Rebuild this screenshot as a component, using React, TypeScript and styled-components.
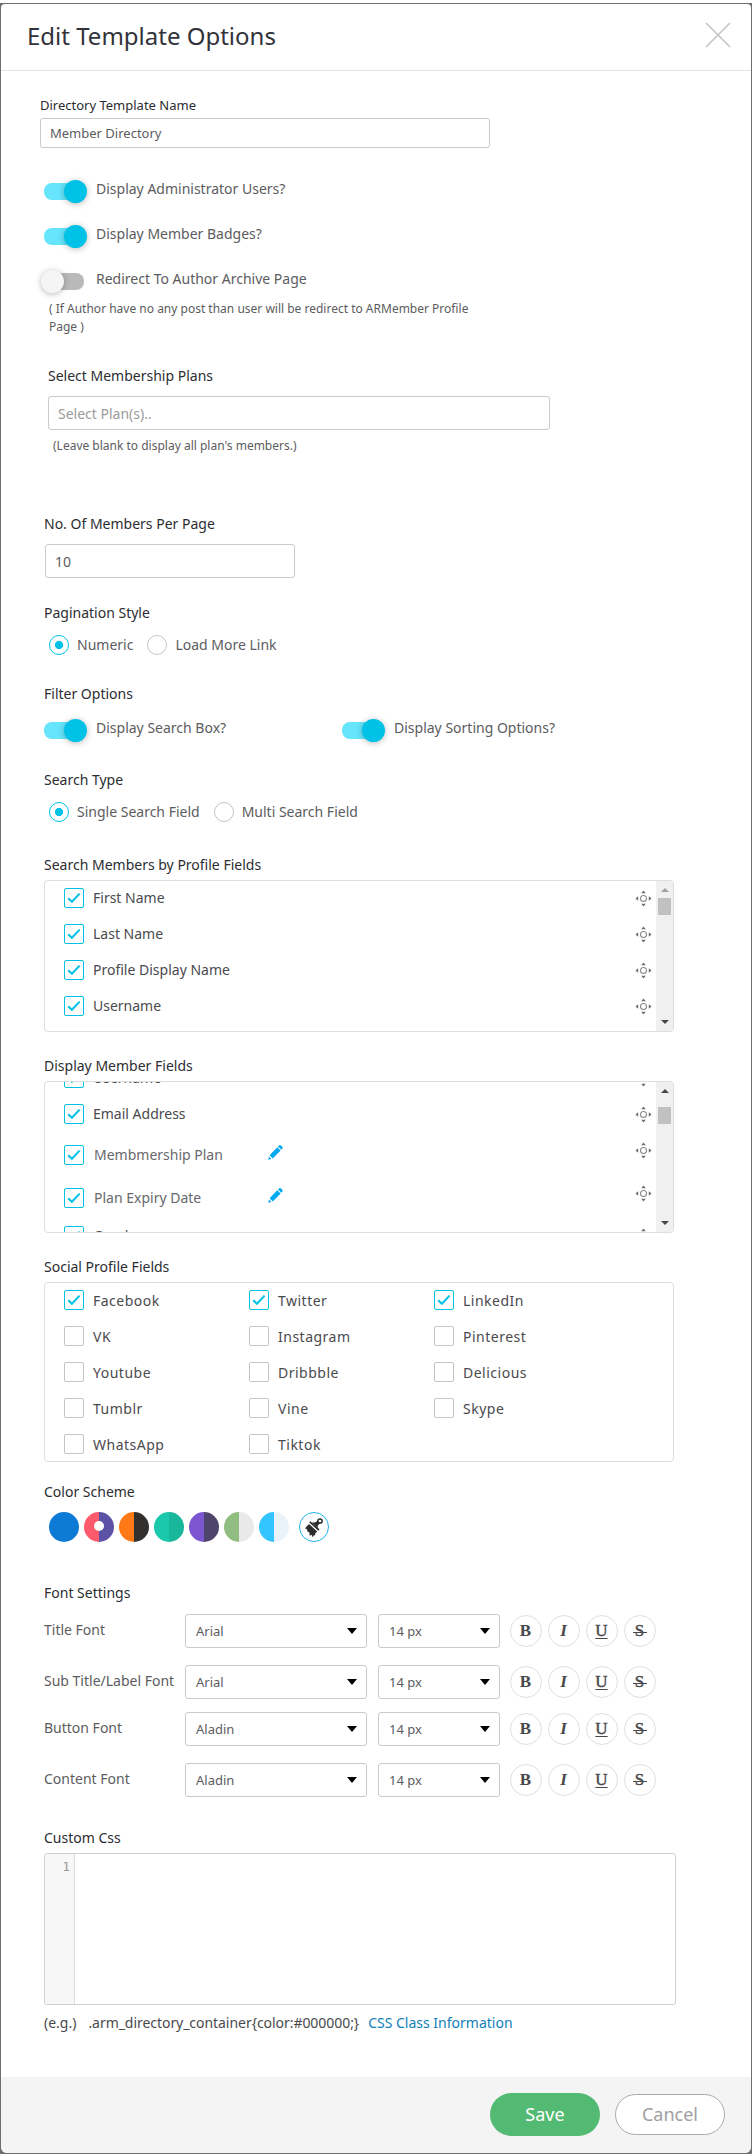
import React from "react";
import styled, { createGlobalStyle, css } from "styled-components";

const GlobalStyle = createGlobalStyle`
  * { box-sizing: border-box; }
  body {
    margin: 0;
    background: #fff;
    font-family: "Noto Sans", "Open Sans", sans-serif;
    font-size: 14px;
    color: #5c5c60;
  }
  button, input { font-family: inherit; }
`;

const Backdrop = styled.div`
  width: 752px;
  height: 2154px;
  padding-top: 3px;
  background: linear-gradient(#fff 3px, #6c6e70 3px);
`;

const Modal = styled.section`
  display: flex;
  flex-direction: column;
  height: 2149px;
  margin: 1px 1px 0;
  background: #fff;
  border-radius: 4px 4px 6px 6px;
  overflow: hidden;
`;

const Header = styled.header`
  display: flex;
  justify-content: space-between;
  height: 67px;
  padding: 16px 20px 0 26px;
  border-bottom: 1px solid #e3e4e5;
`;

const Title = styled.h1`
  margin: 0;
  font-size: 24px;
  line-height: 32px;
  font-weight: 400;
  color: #32323a;
`;

const CloseIcon = styled.svg`
  width: 26px;
  height: 26px;
  margin-top: 2px;
`;

const Body = styled.div`
  flex: 1;
  padding: 24px 75px 0 43px;
`;

const Footer = styled.footer`
  display: flex;
  justify-content: flex-end;
  align-items: flex-start;
  gap: 15px;
  height: 76px;
  padding: 16px 26px 0 0;
  background: #f4f4f4;
`;

const FooterButton = styled.button<{ $primary?: boolean }>`
  width: 110px;
  height: ${(p) => (p.$primary ? 43 : 41)}px;
  margin-top: ${(p) => (p.$primary ? 0 : 1)}px;
  padding: 0;
  border: ${(p) => (p.$primary ? "0" : "1px solid #a9a9a9")};
  border-radius: 22px;
  background: ${(p) => (p.$primary ? "#53ba73" : "#fff")};
  color: ${(p) => (p.$primary ? "#fff" : "#a0a0a0")};
  font-size: 18px;
  line-height: 39px;
`;

const Label = styled.div<{ $top?: number; $indent?: number; $small?: boolean; $spacing?: number }>`
  margin: ${(p) => p.$top ?? 0}px 0 0 ${(p) => p.$indent ?? 0}px;
  height: 20px;
  line-height: 20px;
  white-space: nowrap;
  font-size: ${(p) => (p.$small ? 13 : 14)}px;
  letter-spacing: ${(p) => p.$spacing ?? 0}px;
  color: #2c2d31;
`;

const TextBox = styled.input<{ $w: number; $h?: number; $top: number; $indent: number }>`
  display: block;
  width: ${(p) => p.$w}px;
  height: ${(p) => p.$h ?? 34}px;
  margin: ${(p) => p.$top}px 0 0 ${(p) => p.$indent}px;
  padding: 0 9px;
  border: 1px solid #c9cbcd;
  border-radius: 3px;
  outline: none;
  background: #fff;
  color: #5c5c60;
  font-size: ${(p) => (p.$h ? 13 : 14)}px;
  &::placeholder { color: #9b9b9b; opacity: 1; }
`;

const Note = styled.p<{ $top: number; $indent: number }>`
  width: 440px;
  height: ${(p) => (p.$indent > 5 ? 18 : 36)}px;
  margin: ${(p) => p.$top}px 0 0 ${(p) => p.$indent}px;
  font-size: 12px;
  line-height: 18px;
  color: #5c5c60;
`;

const ToggleRow = styled.div<{ $top: number }>`
  display: flex;
  height: 24px;
  margin-top: ${(p) => p.$top}px;
`;

const ToggleItem = styled.label`
  display: flex;
  align-items: center;
  width: 298px;
  white-space: nowrap;
`;

const Track = styled.span<{ $on: boolean }>`
  display: flex;
  align-items: center;
  justify-content: ${(p) => (p.$on ? "flex-end" : "flex-start")};
  width: 40px;
  height: 17px;
  margin-right: 12px;
  border-radius: 8px;
  background: ${(p) => (p.$on ? "#66e5fc" : "#b9b9b9")};
`;

const Knob = styled.span<{ $on: boolean }>`
  flex: none;
  width: 23px;
  height: 23px;
  margin: 0 ${(p) => (p.$on ? -3 : 0)}px 0 ${(p) => (p.$on ? 0 : -3)}px;
  border-radius: 50%;
  background: ${(p) => (p.$on ? "#00c2e6" : "#f5f5f5")};
  box-shadow: 0 1px 6px rgba(0, 0, 0, 0.28);
`;

const ToggleText = styled.span`
  line-height: 20px;
  margin-top: -4px;
`;

const Toggle = ({ on = true, children }: { on?: boolean; children: React.ReactNode }) => (
  <ToggleItem>
    <Track $on={on}><Knob $on={on} /></Track>
    <ToggleText>{children}</ToggleText>
  </ToggleItem>
);

const RadioRow = styled.div<{ $top: number }>`
  display: flex;
  gap: 14px;
  height: 20px;
  margin: ${(p) => p.$top}px 0 0 5px;
`;

const RadioItem = styled.label`
  display: flex;
  gap: 8px;
  line-height: 20px;
  white-space: nowrap;
`;

const RadioDot = styled.span<{ $on?: boolean }>`
  flex: none;
  width: 20px;
  height: 20px;
  border: 1px solid ${(p) => (p.$on ? "#00c2e6" : "#c5c5c5")};
  border-radius: 50%;
  background: ${(p) => (p.$on ? "radial-gradient(circle, #00c2e6 3.8px, #fff 4.4px)" : "#fff")};
`;

const Panel = styled.div<{ $h?: number; $top?: number }>`
  display: flex;
  width: 630px;
  height: ${(p) => p.$h ?? 152}px;
  margin-top: 5px;
  border: 1px solid #dcdddd;
  border-radius: 4px;
  overflow: hidden;
`;

const FieldList = styled.div<{ $shift?: number }>`
  flex: 1;
  padding-left: 19px;
  margin-top: ${(p) => p.$shift ?? 7}px;
`;

const FieldRow = styled.div<{ $gap?: number }>`
  display: flex;
  align-items: center;
  height: 20px;
  margin-bottom: ${(p) => p.$gap ?? 16}px;
`;

const Check = styled.span<{ $on: boolean }>`
  flex: none;
  display: flex;
  align-items: center;
  justify-content: center;
  width: 20px;
  height: 20px;
  margin-right: 9px;
  border: 1px solid ${(p) => (p.$on ? "#00c2e6" : "#c5c5c5")};
  border-radius: 2px;
  background: #fff;
`;

const Tick = () => (
  <svg width="14" height="12" viewBox="0 0 14 12">
    <path d="M1.2 6.2 4.9 9.8 12.6 1.6" fill="none" stroke="#00c2e6" strokeWidth="2" />
  </svg>
);

const FieldName = styled.span<{ $edit?: boolean }>`
  width: ${(p) => (p.$edit ? 175 : 200)}px;
  padding-left: ${(p) => (p.$edit ? 1 : 0)}px;
  line-height: 20px;
  color: ${(p) => (p.$edit ? "#68686c" : "#4a4a4e")};
  white-space: nowrap;
`;

const PencilIcon = styled.svg`
  width: 15px;
  height: 15px;
  margin-bottom: 5px;
`;

const MoveSvg = styled.svg<{ $lift?: boolean }>`
  width: 17px;
  height: 17px;
  margin: 0 4px ${(p) => (p.$lift ? 9 : 0)}px auto;
`;

const Pencil = () => (
  <PencilIcon viewBox="0 0 15 15">
    <path d="M0.3 14.8 0.9 11.4 3.5 14Z M1.6 10.3 9.2 2.3 12.6 5.6 4.8 13.4Z M10 1.5 11.3 0.3Q12.2 -0.2 13.1 0.6L14.4 1.9Q15 2.7 14.4 3.5L13.3 4.8Z" fill="#00a8f0" />
  </PencilIcon>
);

const Move = ({ lift }: { lift?: boolean }) => (
  <MoveSvg $lift={lift} viewBox="0 0 17 17">
    <circle cx="8.5" cy="8.5" r="3" fill="none" stroke="#8b8b8b" strokeWidth="1.1" />
    <path d="M8.5 0.4 10.8 3.2H6.2Z M8.5 16.6 6.2 13.8H10.8Z M0.4 8.5 3.2 6.2V10.8Z M16.6 8.5 13.8 10.8V6.2Z" fill="#707070" />
  </MoveSvg>
);

const ScrollTrack = styled.div`
  display: flex;
  flex-direction: column;
  align-items: center;
  width: 17px;
  background: #f0f0f0;
`;

const Arrow = styled.span<{ $down?: boolean; $faint?: boolean }>`
  width: 0;
  height: 0;
  margin: ${(p) => (p.$down ? "auto 0 7px" : "7px 0 0")};
  border: 4px solid transparent;
  border-width: ${(p) => (p.$down ? "4px 4px 0" : "0 4px 4px")};
  border-color: ${(p) => (p.$faint ? "#a0a0a0" : "#484848")} transparent;
`;

const Thumb = styled.span<{ $top: number }>`
  width: 13px;
  height: 17px;
  margin-top: ${(p) => p.$top}px;
  background: #c1c1c1;
`;

const Scrollbar = ({ atTop, offset }: { atTop?: boolean; offset: number }) => (
  <ScrollTrack>
    <Arrow $faint={atTop} />
    <Thumb $top={offset} />
    <Arrow $down />
  </ScrollTrack>
);

const SocialGrid = styled.div`
  display: grid;
  grid-template-columns: repeat(3, 185px);
  grid-auto-rows: 36px;
  padding: 7px 0 0 19px;
`;

const SocialName = styled.span`
  line-height: 20px;
  padding-top: 1px;
  color: #4a4a4e;
  letter-spacing: 0.5px;
`;

const Swatches = styled.div`
  display: flex;
  gap: 5px;
  margin: 10px 0 0 5px;
`;

const Swatch = styled.span<{ $left: string; $right: string; $dot?: boolean }>`
  display: flex;
  align-items: center;
  justify-content: center;
  width: 30px;
  height: 30px;
  border-radius: 50%;
  background: linear-gradient(90deg, ${(p) => p.$left} 50%, ${(p) => p.$right} 50%);
  ${(p) => p.$dot && css`
    &::after {
      content: "";
      width: 10px;
      height: 10px;
      margin: -2px 1px 0 0;
      border-radius: 50%;
      background: #fff;
    }
  `}
`;

const CustomSwatch = styled.span`
  width: 30px;
  height: 30px;
  margin-left: 5px;
  border: 1px solid #1fb2e8;
  border-radius: 50%;
`;

const FontRow = styled.div<{ $top: number }>`
  display: flex;
  height: 34px;
  margin-top: ${(p) => p.$top}px;
`;

const FontLabel = styled.span`
  width: 141px;
  line-height: 32px;
  white-space: nowrap;
`;

const Select = styled.div<{ $w: number }>`
  display: flex;
  align-items: center;
  justify-content: space-between;
  width: ${(p) => p.$w}px;
  height: 34px;
  margin-right: 11px;
  padding: 0 9px 0 10px;
  border: 1px solid #c9cbcd;
  border-radius: 3px;
  font-size: 13px;
  &::after {
    content: "";
    border: solid transparent;
    border-width: 6px 5px 0;
    border-top-color: #000;
  }
`;

const StyleButtons = styled.div`
  display: flex;
  gap: 6px;
  margin: 1px 0 0 -1px;
`;

const StyleButton = styled.button<{ $kind: string }>`
  width: 32px;
  height: 32px;
  padding: 0 1px 0 0;
  border: 1px solid #dbe1e8;
  border-radius: 50%;
  background: #fff;
  color: #48484a;
  font-family: "Liberation Serif", serif;
  font-size: 17px;
  line-height: 28px;
  font-weight: ${(p) => (p.$kind === "B" || p.$kind === "I" ? 700 : 400)};
  font-style: ${(p) => (p.$kind === "I" ? "italic" : "normal")};
  -webkit-text-stroke: ${(p) => (p.$kind === "U" || p.$kind === "S" ? "0.4px #48484a" : "0")};
  text-decoration: ${(p) => (p.$kind === "U" ? "underline" : "none")};
  text-underline-offset: 2px;
`;

const Struck = styled.span`
  display: inline-block;
  width: 14px;
  background: linear-gradient(#48484a, #48484a) 0 15px / 14px 1px no-repeat;
`;

const CodeBox = styled.div`
  display: flex;
  width: 632px;
  height: 152px;
  margin-top: 5px;
  border: 1px solid #cfd0d1;
  border-radius: 3px;
  overflow: hidden;
`;

const Gutter = styled.div`
  width: 30px;
  padding: 4px 4px 0 0;
  border-right: 1px solid #dcdcdc;
  background: #f7f7f7;
  color: #9a9a9a;
  text-align: right;
  font-family: "DejaVu Sans Mono", monospace;
  font-size: 13px;
  line-height: 18px;
`;

const Example = styled.div`
  display: flex;
  margin-top: 8px;
  line-height: 20px;
  color: #4a4a4e;
`;

const ExampleCode = styled.span`
  margin: 0 9px 0 12px;
  letter-spacing: -0.05px;
`;

const CssLink = styled.a`
  color: #0f7fb8;
`;

const profileFields = ["First Name", "Last Name", "Profile Display Name", "Username"];

const memberFields = [
  { name: "Username", gap: 16 },
  { name: "Email Address", gap: 21 },
  { name: "Membmership Plan", gap: 23, editable: true },
  { name: "Plan Expiry Date", gap: 18, editable: true },
  { name: "Gender", gap: 0 },
];

const socialFields = [
  "Facebook", "Twitter", "LinkedIn", "VK", "Instagram", "Pinterest", "Youtube",
  "Dribbble", "Delicious", "Tumblr", "Vine", "Skype", "WhatsApp", "Tiktok",
];

const schemes = [
  ["#0d7bd6", "#0d7bd6"], ["#fd5a6c", "#5b52a5"], ["#ff7a16", "#32302f"], ["#1ac9ab", "#18b69b"],
  ["#7b56d0", "#4f446b"], ["#92bd80", "#e9e9e9"], ["#33c5ff", "#ebf3fa"],
];

const fontRows = [
  { label: "Title Font", font: "Arial", top: 11 },
  { label: "Sub Title/Label Font", font: "Arial", top: 17 },
  { label: "Button Font", font: "Aladin", top: 13 },
  { label: "Content Font", font: "Aladin", top: 17 },
];

export default function App() {
  return (
    <Backdrop>
      <GlobalStyle />
      <Modal>
        <Header>
          <Title>Edit Template Options</Title>
          <CloseIcon viewBox="0 0 26 26">
            <path d="M1 1 25 25 M25 1 1 25" stroke="#c6c6c6" strokeWidth="1.7" />
          </CloseIcon>
        </Header>
        <Body>
          <Label $small $indent={-4}>Directory Template Name</Label>
          <TextBox $w={450} $h={30} $top={3} $indent={-4} defaultValue="Member Directory" />
          <ToggleRow $top={31}><Toggle>Display Administrator Users?</Toggle></ToggleRow>
          <ToggleRow $top={21}><Toggle>Display Member Badges?</Toggle></ToggleRow>
          <ToggleRow $top={21}><Toggle on={false}>Redirect To Author Archive Page</Toggle></ToggleRow>
          <Note $top={7} $indent={5}>( If Author have no any post than user will be redirect to ARMember Profile Page )</Note>

          <Label $top={30} $indent={4}>Select Membership Plans</Label>
          <TextBox $w={502} $top={10} $indent={4} placeholder="Select Plan(s).." />
          <Note $top={7} $indent={9}>(Leave blank to display all plan's members.)</Note>

          <Label $top={59}>No. Of Members Per Page</Label>
          <TextBox $w={250} $top={10} $indent={1} defaultValue="10" />

          <Label $top={25}>Pagination Style</Label>
          <RadioRow $top={12}>
            <RadioItem><RadioDot $on />Numeric</RadioItem>
            <RadioItem><RadioDot />Load More Link</RadioItem>
          </RadioRow>

          <Label $top={29}>Filter Options</Label>
          <ToggleRow $top={14}>
            <Toggle>Display Search Box?</Toggle>
            <Toggle>Display Sorting Options?</Toggle>
          </ToggleRow>

          <Label $top={28}>Search Type</Label>
          <RadioRow $top={12}>
            <RadioItem><RadioDot $on />Single Search Field</RadioItem>
            <RadioItem><RadioDot />Multi Search Field</RadioItem>
          </RadioRow>

          <Label $top={33}>Search Members by Profile Fields</Label>
          <Panel>
            <FieldList>
              {profileFields.map((name) => (
                <FieldRow key={name}>
                  <Check $on><Tick /></Check>
                  <FieldName>{name}</FieldName>
                  <Move />
                </FieldRow>
              ))}
            </FieldList>
            <Scrollbar atTop offset={6} />
          </Panel>

          <Label $top={24}>Display Member Fields</Label>
          <Panel>
            <FieldList $shift={-14}>
              {memberFields.map((f) => (
                <FieldRow key={f.name} $gap={f.gap}>
                  <Check $on><Tick /></Check>
                  <FieldName $edit={f.editable}>{f.name}</FieldName>
                  {f.editable && <Pencil />}
                  <Move lift={f.editable} />
                </FieldRow>
              ))}
            </FieldList>
            <Scrollbar offset={14} />
          </Panel>

          <Label $top={24}>Social Profile Fields</Label>
          <Panel $h={180}>
            <SocialGrid>
              {socialFields.map((name, i) => (
                <FieldRow key={name}>
                  <Check $on={i < 3}>{i < 3 && <Tick />}</Check>
                  <SocialName>{name}</SocialName>
                </FieldRow>
              ))}
            </SocialGrid>
          </Panel>

          <Label $top={20}>Color Scheme</Label>
          <Swatches>
            {schemes.map(([left, right], i) => (
              <Swatch key={left} $left={left} $right={right} $dot={i === 1} />
            ))}
            <CustomSwatch>
              <svg width="28" height="28" viewBox="0 0 28 28">
                <path d="M9 11 17.2 18.6 15.2 20.6 15 22.4 13.8 22.2 12.3 24.2 11.8 22 9.6 22.6 9.4 19.4 7.2 18.2 7.2 16.4 5 15.2Z" fill="#2c2c2c" />
                <path d="M9.8 8.8 18.9 17" stroke="#2c2c2c" strokeWidth="1.7" />
                <path d="M11.8 9.4 14.8 9.6 18.2 7.4 20.4 9.8 17.6 12.8 18.2 15.2Z" fill="#2c2c2c" />
                <circle cx="20" cy="8" r="2.1" fill="#fff" stroke="#2c2c2c" strokeWidth="1.5" />
              </svg>
            </CustomSwatch>
          </Swatches>

          <Label $top={41}>Font Settings</Label>
          {fontRows.map((row) => (
            <FontRow key={row.label} $top={row.top}>
              <FontLabel>{row.label}</FontLabel>
              <Select $w={182}>{row.font}</Select>
              <Select $w={122}>14 px</Select>
              <StyleButtons>
                {["B", "I", "U"].map((k) => <StyleButton key={k} $kind={k}>{k}</StyleButton>)}
                <StyleButton $kind="S"><Struck>S</Struck></StyleButton>
              </StyleButtons>
            </FontRow>
          ))}

          <Label $top={31}>Custom Css</Label>
          <CodeBox><Gutter>1</Gutter></CodeBox>
          <Example>
            (e.g.)
            <ExampleCode>.arm_directory_container{"{color:#000000;}"}</ExampleCode>
            <CssLink>CSS Class Information</CssLink>
          </Example>
        </Body>
        <Footer>
          <FooterButton $primary>Save</FooterButton>
          <FooterButton>Cancel</FooterButton>
        </Footer>
      </Modal>
    </Backdrop>
  );
}
